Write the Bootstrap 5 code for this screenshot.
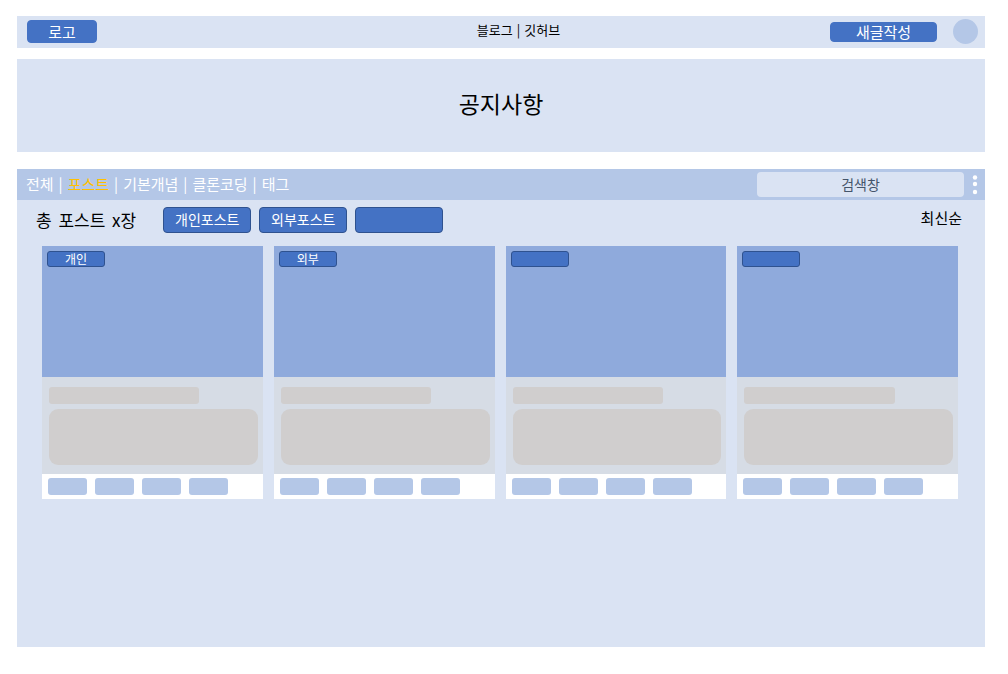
<!DOCTYPE html>
<html lang="ko">
<head>
<meta charset="utf-8">
<meta name="viewport" content="width=device-width, initial-scale=1">
<title>블로그</title>
<link href="https://cdn.jsdelivr.net/npm/bootstrap@5.3.0/dist/css/bootstrap.min.css" rel="stylesheet">
<style>
  :root {
    --panel: #dae3f3;
    --soft: #b4c7e7;
    --media: #8faadc;
    --primary: #4472c4;
    --primary-line: #2f528f;
    --skeleton: #d0cece;
  }
  body {
    font-family: "Noto Sans CJK KR", sans-serif;
    font-size: 15px;
    line-height: 20px;
    color: #000;
    background: #fff;
    padding: 16px 23px 27px 17px;
  }
  a { color: inherit; text-decoration: none; }
  .panel { background: var(--panel); }
  .btn {
    --bs-btn-padding-x: 0;
    --bs-btn-padding-y: 0;
    --bs-btn-font-size: 15px;
    --bs-btn-line-height: 20px;
    --bs-btn-border-radius: 4px;
    --bs-btn-color: #000;
  }
  .btn-fill {
    --bs-btn-color: #fff;
    --bs-btn-bg: var(--primary);
    --bs-btn-border-color: var(--primary);
    --bs-btn-hover-color: #fff;
    --bs-btn-hover-bg: var(--primary-line);
  }
  .site-header {
    display: grid;
    grid-template-columns: 1fr auto 1fr;
    align-items: center;
    min-height: 32px;
    padding: 0 7px 1px 10px;
    margin-bottom: 11px;
  }
  .logo-btn { width: 70px; height: 23px; }
  .write-btn { width: 107px; height: 20px; line-height: 18px; }
  .avatar { width: 25px; height: 25px; background: var(--soft); }
  .site-links { gap: 4px; font-size: 13px; padding-left: 32px; padding-bottom: 4px; }
  .notice { padding: 28px 0 32px; min-height: 93px; margin-bottom: 17px; }
  .notice h1 { font-size: 23px; line-height: 32px; font-weight: 400; margin: 0; }
  .tab-bar { background: var(--soft); min-height: 31px; padding: 0 7px 0 9px; }
  .tabs { gap: 5px; color: #fff; padding-bottom: 2px; }
  .tabs .current { color: #ffc000; }
  .search {
    width: 207px;
    height: 25px;
    padding: 0 8px 2px;
    font-size: 14px;
    border: 0;
    border-radius: 4px;
    background: var(--panel);
    text-align: center;
  }
  .search::placeholder { color: #44546a; opacity: 1; }
  .more-btn { width: 6px; }
  .toolbar { padding: 7px 23px 13px 19px; }
  .toolbar h2 { font-size: 17px; line-height: 26px; font-weight: 400; margin: 0 27px 0 0; }
  .toolbar h2 span { margin: 0 2px; }
  .sort-btn { padding-bottom: 4px; }
  .filter-btn {
    --bs-btn-font-size: 14px;
    --bs-btn-border-color: var(--primary-line);
    width: 88px;
    height: 26px;
    padding-bottom: 2px;
  }
  .posts { padding: 0 27px 24px 25px; }
  .posts .row { --bs-gutter-x: 11px; --bs-gutter-y: 11px; }
  .post-media { height: 131px; padding: 5px; background: var(--media); }
  .post-tag {
    display: block;
    width: 58px;
    height: 16px;
    font-size: 12px;
    line-height: 13px;
    text-align: center;
    color: #fff;
    background: var(--primary);
    border: 1px solid var(--primary-line);
    border-radius: 3px;
  }
  .post-info { padding: 10px 5px 9px 7px; background: #d6dce5; }
  .line-title { width: 72%; height: 17px; border-radius: 3px; background: var(--skeleton); margin-bottom: 5px; }
  .line-text { height: 56px; border-radius: 9px; background: var(--skeleton); }
  .post-foot { gap: 8px; padding: 4px 6px; background: #fff; }
  .chip { width: 39px; height: 17px; border-radius: 3px; background: var(--soft); }
</style>
</head>
<body class="min-vh-100 d-flex flex-column">
  <header class="site-header panel">
    <div class="d-flex"><button type="button" class="btn btn-fill logo-btn">로고</button></div>
    <nav class="site-links d-flex"><a href="#">블로그</a><span>|</span><a href="#">깃허브</a></nav>
    <div class="d-flex justify-content-end align-items-center gap-3">
      <button type="button" class="btn btn-fill write-btn">새글작성</button>
      <span class="avatar rounded-circle"></span>
    </div>
  </header>

  <section class="notice panel text-center">
    <h1>공지사항</h1>
  </section>

  <main class="panel flex-grow-1">
    <div class="tab-bar d-flex flex-wrap align-items-center">
      <nav class="tabs d-flex me-auto">
        <a href="#">전체</a><span>|</span>
        <a href="#" class="current" aria-current="page">포스트</a><span>|</span>
        <a href="#">기본개념</a><span>|</span>
        <a href="#">클론코딩</a><span>|</span>
        <a href="#">태그</a>
      </nav>
      <div class="d-flex align-items-center gap-2">
        <input type="text" class="search" placeholder="검색창" aria-label="검색창">
        <button type="button" class="btn border-0 more-btn d-flex" aria-label="더보기">
          <svg width="6" height="20" viewBox="0 0 6 20" fill="#fff"><circle cx="3" cy="2.5" r="2.2"/><circle cx="3" cy="9" r="2.2"/><circle cx="3" cy="17" r="2.2"/></svg>
        </button>
      </div>
    </div>

    <div class="toolbar d-flex flex-wrap align-items-center">
      <h2>총 <span>포스트</span> x장</h2>
      <div class="d-flex gap-2 me-auto">
        <button type="button" class="btn btn-fill filter-btn">개인포스트</button>
        <button type="button" class="btn btn-fill filter-btn">외부포스트</button>
        <button type="button" class="btn btn-fill filter-btn" aria-label="필터"></button>
      </div>
      <button type="button" class="btn border-0 sort-btn">최신순</button>
    </div>

    <div class="posts">
      <div class="row row-cols-2 row-cols-md-4">
        <div class="col">
          <article>
            <div class="post-media"><span class="post-tag">개인</span></div>
            <div class="post-info"><div class="line-title"></div><div class="line-text"></div></div>
            <div class="post-foot d-flex"><span class="chip"></span><span class="chip"></span><span class="chip"></span><span class="chip"></span></div>
          </article>
        </div>
        <div class="col">
          <article>
            <div class="post-media"><span class="post-tag">외부</span></div>
            <div class="post-info"><div class="line-title"></div><div class="line-text"></div></div>
            <div class="post-foot d-flex"><span class="chip"></span><span class="chip"></span><span class="chip"></span><span class="chip"></span></div>
          </article>
        </div>
        <div class="col">
          <article>
            <div class="post-media"><span class="post-tag"></span></div>
            <div class="post-info"><div class="line-title"></div><div class="line-text"></div></div>
            <div class="post-foot d-flex"><span class="chip"></span><span class="chip"></span><span class="chip"></span><span class="chip"></span></div>
          </article>
        </div>
        <div class="col">
          <article>
            <div class="post-media"><span class="post-tag"></span></div>
            <div class="post-info"><div class="line-title"></div><div class="line-text"></div></div>
            <div class="post-foot d-flex"><span class="chip"></span><span class="chip"></span><span class="chip"></span><span class="chip"></span></div>
          </article>
        </div>
      </div>
    </div>
  </main>
<script src="https://cdn.jsdelivr.net/npm/bootstrap@5.3.0/dist/js/bootstrap.bundle.min.js"></script>
</body>
</html>
